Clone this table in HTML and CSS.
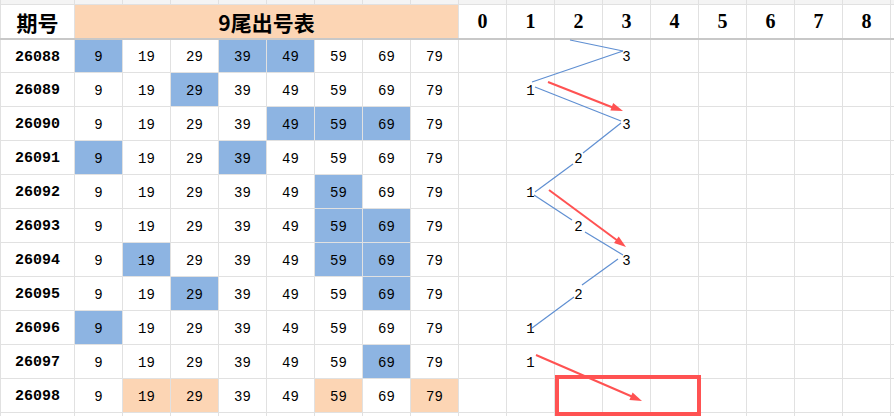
FILE: index.html
```html
<!DOCTYPE html>
<html lang="zh">
<head>
<meta charset="utf-8">
<title>9尾出号表</title>
<link rel="stylesheet" href="styles.css">
</head>
<body>
<div class="sheet">
  <div class="row strip">
    <div></div><div></div><div></div><div></div><div></div><div></div><div></div><div></div><div></div>
    <div></div><div></div><div></div><div></div><div></div><div></div><div></div><div></div><div></div><div></div>
  </div>
  <div class="row head">
    <div class="h-label">期号</div>
    <div class="h-title">9尾出号表</div>
    <div class="h-num">0</div><div class="h-num">1</div><div class="h-num">2</div><div class="h-num">3</div><div class="h-num">4</div><div class="h-num">5</div><div class="h-num">6</div><div class="h-num">7</div><div class="h-num">8</div>
    <div></div>
  </div>

  <div class="row data first">
    <div class="pid">26088</div>
    <div class="v blue">9</div><div class="v">19</div><div class="v">29</div><div class="v blue">39</div><div class="v blue">49</div><div class="v">59</div><div class="v">69</div><div class="v">79</div>
    <div></div><div></div><div></div><div class="lbl">3</div><div></div><div></div><div></div><div></div><div></div><div></div>
  </div>
  <div class="row data">
    <div class="pid">26089</div>
    <div class="v">9</div><div class="v">19</div><div class="v blue">29</div><div class="v">39</div><div class="v">49</div><div class="v">59</div><div class="v">69</div><div class="v">79</div>
    <div></div><div class="lbl">1</div><div></div><div></div><div></div><div></div><div></div><div></div><div></div><div></div>
  </div>
  <div class="row data">
    <div class="pid">26090</div>
    <div class="v">9</div><div class="v">19</div><div class="v">29</div><div class="v">39</div><div class="v blue">49</div><div class="v blue">59</div><div class="v blue">69</div><div class="v">79</div>
    <div></div><div></div><div></div><div class="lbl">3</div><div></div><div></div><div></div><div></div><div></div><div></div>
  </div>
  <div class="row data">
    <div class="pid">26091</div>
    <div class="v blue">9</div><div class="v">19</div><div class="v">29</div><div class="v blue">39</div><div class="v">49</div><div class="v">59</div><div class="v">69</div><div class="v">79</div>
    <div></div><div></div><div class="lbl">2</div><div></div><div></div><div></div><div></div><div></div><div></div><div></div>
  </div>
  <div class="row data">
    <div class="pid">26092</div>
    <div class="v">9</div><div class="v">19</div><div class="v">29</div><div class="v">39</div><div class="v">49</div><div class="v blue">59</div><div class="v">69</div><div class="v">79</div>
    <div></div><div class="lbl">1</div><div></div><div></div><div></div><div></div><div></div><div></div><div></div><div></div>
  </div>
  <div class="row data">
    <div class="pid">26093</div>
    <div class="v">9</div><div class="v">19</div><div class="v">29</div><div class="v">39</div><div class="v">49</div><div class="v blue">59</div><div class="v blue">69</div><div class="v">79</div>
    <div></div><div></div><div class="lbl">2</div><div></div><div></div><div></div><div></div><div></div><div></div><div></div>
  </div>
  <div class="row data">
    <div class="pid">26094</div>
    <div class="v">9</div><div class="v blue">19</div><div class="v">29</div><div class="v">39</div><div class="v">49</div><div class="v blue">59</div><div class="v blue">69</div><div class="v">79</div>
    <div></div><div></div><div></div><div class="lbl">3</div><div></div><div></div><div></div><div></div><div></div><div></div>
  </div>
  <div class="row data">
    <div class="pid">26095</div>
    <div class="v">9</div><div class="v">19</div><div class="v blue">29</div><div class="v">39</div><div class="v">49</div><div class="v">59</div><div class="v blue">69</div><div class="v">79</div>
    <div></div><div></div><div class="lbl">2</div><div></div><div></div><div></div><div></div><div></div><div></div><div></div>
  </div>
  <div class="row data">
    <div class="pid">26096</div>
    <div class="v blue">9</div><div class="v">19</div><div class="v">29</div><div class="v">39</div><div class="v">49</div><div class="v">59</div><div class="v">69</div><div class="v">79</div>
    <div></div><div class="lbl">1</div><div></div><div></div><div></div><div></div><div></div><div></div><div></div><div></div>
  </div>
  <div class="row data">
    <div class="pid">26097</div>
    <div class="v">9</div><div class="v">19</div><div class="v">29</div><div class="v">39</div><div class="v">49</div><div class="v">59</div><div class="v blue">69</div><div class="v">79</div>
    <div></div><div class="lbl">1</div><div></div><div></div><div></div><div></div><div></div><div></div><div></div><div></div>
  </div>
  <div class="row data">
    <div class="pid">26098</div>
    <div class="v">9</div><div class="v peach">19</div><div class="v peach">29</div><div class="v">39</div><div class="v">49</div><div class="v peach">59</div><div class="v">69</div><div class="v peach">79</div>
    <div></div><div></div><div></div><div></div><div></div><div></div><div></div><div></div><div></div><div></div>
  </div>
  <div class="row data">
    <div></div><div></div><div></div><div></div><div></div><div></div><div></div><div></div><div></div>
    <div></div><div></div><div></div><div></div><div></div><div></div><div></div><div></div><div></div><div></div>
  </div>

  <svg class="chart" width="894" height="416" viewBox="0 0 894 416" xmlns="http://www.w3.org/2000/svg">
    <g class="trend">
      <line x1="570" y1="40" x2="623" y2="51"/>
      <line x1="623" y1="51" x2="532" y2="82"/>
      <line x1="535" y1="87" x2="621" y2="121"/>
      <line x1="621" y1="123" x2="583" y2="153"/>
      <line x1="573" y1="164" x2="535" y2="192"/>
      <line x1="534" y1="195" x2="572" y2="220"/>
      <line x1="585" y1="232" x2="623" y2="255"/>
      <line x1="618" y1="259" x2="582" y2="285"/>
      <line x1="574" y1="297" x2="532" y2="328"/>
    </g>
    <g class="arrow">
      <line x1="548" y1="82" x2="614" y2="108"/>
      <polygon points="623,111 610.4,110.4 613.2,103"/>
      <line x1="549" y1="190" x2="618" y2="241"/>
      <polygon points="626,247 614,243.1 618.7,236.6"/>
      <line x1="536" y1="355" x2="633" y2="397"/>
      <polygon points="642,401 629.4,399.9 632.6,392.6"/>
    </g>
    <rect class="box" x="557" y="377" width="142" height="37"/>
  </svg>
</div>
</body>
</html>
```

FILE: styles.css
```css
html, body {
  margin: 0;
  padding: 0;
  background: #ffffff;
  overflow: hidden;
}

.sheet {
  position: relative;
  width: 894px;
  height: 416px;
  overflow: hidden;
  display: flex;
  flex-direction: column;
  gap: 1px;
  background: #e1e1e1;
}

.row {
  display: grid;
  grid-template-columns: 73px repeat(17, 47px) 3px;
  column-gap: 1px;
  padding-left: 1px;
  background: #e1e1e1;
  flex: none;
}

.row > div {
  background: #ffffff;
  display: flex;
  align-items: center;
  justify-content: center;
  color: #000000;
}

.strip {
  height: 4px;
}

.strip > div {
  background: #f4f4f4;
}

.head {
  height: 33px;
  border-bottom: 2px solid #c8c8c8;
  margin-bottom: -1px;
}

.h-label {
  font-family: "Noto Sans CJK SC", "Noto Sans", sans-serif;
  font-weight: 700;
  font-size: 21px;
}

.h-title {
  grid-column: span 8;
  background: #fcd5b4 !important;
  font-family: "Noto Sans CJK SC", "Noto Sans", sans-serif;
  font-weight: 700;
  font-size: 21px;
}

.h-num {
  font-family: "Liberation Serif", "Times New Roman", serif;
  font-weight: 700;
  font-size: 20px;
}

.data {
  height: 33px;
}

.data.first {
  height: 32px;
}

.pid {
  font-family: "Liberation Mono", "DejaVu Sans Mono", monospace;
  font-weight: 700;
  font-size: 15px;
  padding-top: 2px;
  box-sizing: border-box;
}

.v,
.lbl {
  font-family: "Liberation Mono", "DejaVu Sans Mono", monospace;
  font-size: 14px;
  padding-top: 2px;
  box-sizing: border-box;
}

.row > .blue {
  background: #8db4e2;
}

.row > .peach {
  background: #fcd5b4;
}

.chart {
  position: absolute;
  left: 0;
  top: 0;
  pointer-events: none;
}

.trend line {
  stroke: #5f8fd2;
  stroke-width: 1.2;
}

.arrow line {
  stroke: #ff5252;
  stroke-width: 2;
}

.arrow polygon {
  fill: #ff5252;
}

.box {
  fill: none;
  stroke: #ff5252;
  stroke-width: 4;
}
```
